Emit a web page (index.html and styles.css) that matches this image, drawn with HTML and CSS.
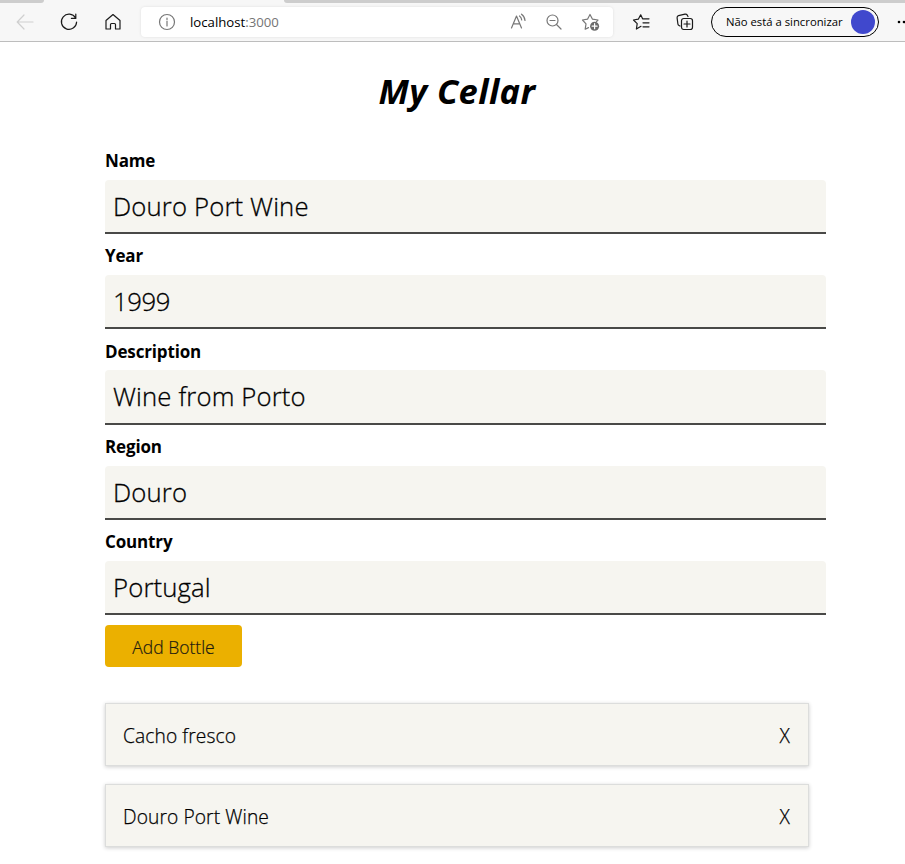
FILE: index.html
```html
<!DOCTYPE html>
<html lang="en">
<head>
<meta charset="utf-8">
<title>My Cellar</title>
<link rel="stylesheet" href="styles.css">
</head>
<body>
<header class="browser">
  <div class="tabs"><span class="tab-left"></span><span class="tab-right"></span></div>
  <div class="toolbar">
    <svg class="icon back" width="18" height="18" viewBox="0 0 18 18"><path d="M17 9H1.5M8 2L1.2 9L8 16"/></svg>
    <svg class="icon reload" width="18" height="18" viewBox="0 0 18 18"><path d="M15.6 5A7.6 7.6 0 1 0 16.6 9M15.8 1V5.4H11.4"/></svg>
    <svg class="icon home" width="18" height="18" viewBox="0 0 18 18"><path d="M2 7.5L9 1.5L16 7.5V16H11.5V11.5Q11.5 10.5 10.5 10.5H7.5Q6.5 10.5 6.5 11.5V16H2Z"/></svg>
    <div class="address">
      <svg class="icon info" width="18" height="18" viewBox="0 0 18 18"><circle cx="9" cy="9" r="7.5"/><path d="M9 8V13M9 5V6.5"/></svg>
      <span class="url"><span class="host">localhost</span><span class="port">:3000</span></span>
      <svg class="icon read" width="18" height="18" viewBox="0 0 18 18"><path d="M1.5 15L6.5 3L11.5 15M3.3 10.8H9.7M9.5 3Q11.5 4.5 11.7 7M11.5 1.2Q14.8 3.5 15 7.5"/></svg>
      <svg class="icon zoom" width="18" height="18" viewBox="0 0 18 18"><circle cx="7.5" cy="7.5" r="5.5"/><path d="M5 7.5H10M11.5 11.5L16 16"/></svg>
      <svg class="icon star" width="20" height="18" viewBox="0 0 20 18"><path d="M7.5 14.6L4.2 16.2L5 10.8L1.5 7L6.5 6.2L9 1.5L11.5 6.2L17 7L15.5 8.6"/><circle class="badge" cx="13.6" cy="13.2" r="4.5"/><path class="plus" d="M11.1 13.2H16.1M13.6 10.7V15.7"/></svg>
    </div>
    <svg class="icon favs" width="18" height="18" viewBox="0 0 18 18"><path d="M9 13.3L4.4 16L5.2 10.7L1.5 7L6.3 6.2L8.7 1.8L10.6 5.8H17M11 9.8H17M11 13.8H17"/></svg>
    <svg class="icon collections" width="18" height="18" viewBox="0 0 18 18"><path d="M4 13L3 12.5Q2 12 1.9 11L1.1 4.8Q1 3 2.5 2.6L9 1.2Q10.5 1 11.3 2.2L12 3.5"/><rect x="5.5" y="5.5" width="11" height="11" rx="2.2"/><path d="M8 11H14M11 8V14"/></svg>
    <div class="profile"><span class="profile-text">Não está a sincronizar</span><span class="avatar"></span></div>
    <svg class="more" width="10" height="4" viewBox="0 0 10 4"><circle cx="2" cy="2" r="1.3"/><circle cx="7" cy="2" r="1.3"/></svg>
  </div>
</header>
<main>
  <h1><span>My Cellar</span></h1>
  <form>
    <div class="field"><label for="name">Name</label><input id="name" value="Douro Port Wine"></div>
    <div class="field"><label for="year">Year</label><input id="year" class="digits" value="1999"></div>
    <div class="field"><label for="desc">Description</label><input id="desc" value="Wine from Porto"></div>
    <div class="field"><label for="region">Region</label><input id="region" value="Douro"></div>
    <div class="field"><label for="country">Country</label><input id="country" value="Portugal"></div>
    <button type="button" class="add">Add Bottle</button>
  </form>
  <ul class="bottles">
    <li><span>Cacho fresco</span><span class="remove">X</span></li>
    <li><span>Douro Port Wine</span><span class="remove">X</span></li>
  </ul>
</main>
</body>
</html>
```
FILE: styles.css
```css
* { box-sizing: border-box; }
body {
  margin: 0;
  height: 864px;
  overflow: hidden;
  background: #fff;
  color: #000;
  font-family: "Open Sans", "Noto Sans", sans-serif;
}
.browser {
  height: 42px;
  background: #f7f7f7;
  border-bottom: 1px solid #bdbdbd;
  overflow: hidden;
}
.tabs { display: flex; justify-content: space-between; height: 3px; }
.tab-left { width: 44px; background: #cdcdcd; border-radius: 0 0 3px 0; }
.tab-right { width: 621px; background: #cdcdcd; border-radius: 0 0 0 3px; }
.toolbar { display: flex; align-items: center; height: 38px; padding-left: 16px; }
.icon { flex: none; fill: none; stroke: #1b1b1b; stroke-width: 1.2; stroke-linejoin: round; stroke-linecap: round; }
.back { stroke: #cfcfcf; }
.reload { margin-left: 26px; }
.home { margin-left: 26px; }
.address {
  display: flex;
  flex: none;
  align-items: center;
  width: 472px;
  height: 30px;
  margin-left: 19px;
  padding-left: 17px;
  border-radius: 4px;
  background: #fff;
  box-shadow: 0 0 3px #0000001a;
}
.address .icon { stroke: #777; }
.url { width: 320px; margin-left: 14px; font-size: 13.2px; line-height: 20px; }
.port { color: #757575; }
.zoom { margin-left: 17px; }
.star { margin-left: 18px; }
.star .badge { fill: #6b6b6b; stroke: none; }
.address .star .plus { stroke: #fff; }
.favs { margin-left: 19px; }
.collections { margin-left: 26px; }
.profile {
  display: flex;
  flex: none;
  align-items: center;
  justify-content: space-between;
  width: 168px;
  height: 30px;
  margin-left: 17px;
  padding: 0 3px 0 14px;
  border: 1px solid #000;
  border-radius: 15px;
  white-space: nowrap;
}
.profile-text { padding-bottom: 1px; font-size: 11.3px; }
.avatar { width: 24px; height: 24px; border-radius: 50%; background: #4048cd; }
.more { flex: none; margin-left: 18px; }
main { width: 721px; margin-left: 105px; }
h1 {
  height: 103px;
  margin: 0;
  padding-top: 24px;
  padding-right: 17px;
  font: italic 700 34.5px/50px "Noto Sans", sans-serif;
  letter-spacing: 0.4px;
  text-align: center;
}
.field { height: 95.25px; }
label { display: block; height: 34.8px; font-size: 17px; font-weight: 700; line-height: 32px; letter-spacing: -0.15px; }
input {
  display: block;
  width: 100%;
  height: 54.4px;
  padding: 1px 8px 0;
  border: 0;
  border-bottom: 2px solid #494947;
  border-radius: 4px 4px 0 0;
  background: #f6f5f0;
  color: #000;
  font: 300 25.7px "Open Sans", sans-serif;
  letter-spacing: 0.15px;
  -webkit-text-stroke: 0.3px #000;
  outline: 0;
}
.digits { letter-spacing: -0.4px; }
.add {
  display: block;
  width: 137px;
  height: 42px;
  margin-top: 3.75px;
  padding: 2px 0 0;
  border: 0;
  border-radius: 4px;
  background: #ebb000;
  color: #1c1a10;
  font: 300 17.5px "Open Sans", sans-serif;
  -webkit-text-stroke: 0.2px #1c1a10;
}
.bottles { width: 704px; margin: 36px 0 0; padding: 0; list-style: none; }
.bottles li {
  display: flex;
  align-items: center;
  justify-content: space-between;
  height: 63.4px;
  margin-bottom: 17.6px;
  padding: 1px 18px 0 17px;
  border: 1px solid #dcdddc;
  background: #f6f5f0;
  box-shadow: 0 1px 4px #00000033;
  font-size: 19.2px;
  font-weight: 300;
  letter-spacing: 0.1px;
  -webkit-text-stroke: 0.25px #000;
}
```
